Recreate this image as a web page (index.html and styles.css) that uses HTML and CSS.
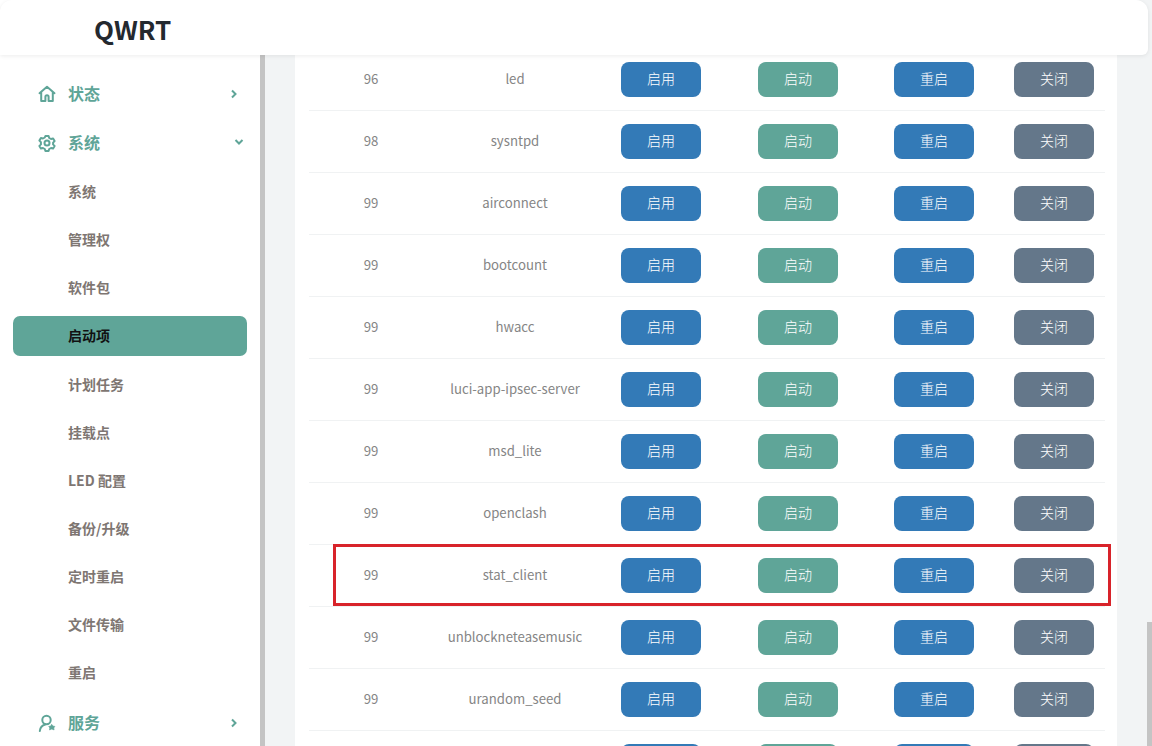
FILE: index.html
```html
<!DOCTYPE html>
<html lang="zh">
<head>
<meta charset="utf-8">
<title>QWRT</title>
<link rel="stylesheet" href="styles.css">
</head>
<body>
<header class="topbar"><span class="brand">QWRT</span></header>
<div class="layout">
  <nav class="sidebar">
    <a class="nav-top">
      <svg class="nav-icon" viewBox="0 0 18 18"><path d="M1.500 8.200 9 1.800l7.500 6.400M3.200 7v9h4.200v-4.200a1.600 1.600 0 0 1 3.200 0V16h4.200V7"/></svg>
      <span>状态</span>
      <svg class="chev" viewBox="0 0 8 10"><path d="M2 1.500 5.500 5 2 8.500"/></svg>
    </a>
    <a class="nav-top">
      <svg class="nav-icon" viewBox="0 0 18 18"><path d="M7.400 2h3.200l.6 2 1.800 1 2.100-.5 1.500 2.600-1.500 1.500v1.800l1.500 1.500-1.500 2.600-2.100-.5-1.800 1-.6 2H7.400l-.6-2-1.800-1-2.100.5-1.500-2.600 1.500-1.500V8.100L1.400 6.600l1.500-2.600 2.100.5 1.800-1z"/><circle cx="9" cy="9" r="2.500"/></svg>
      <span>系统</span>
      <svg class="chev chev-down" viewBox="0 0 10 8"><path d="M1.500 2 5 5.500 8.500 2"/></svg>
    </a>
    <a class="nav-sub">系统</a>
    <a class="nav-sub">管理权</a>
    <a class="nav-sub">软件包</a>
    <a class="nav-sub active">启动项</a>
    <a class="nav-sub">计划任务</a>
    <a class="nav-sub">挂载点</a>
    <a class="nav-sub">LED 配置</a>
    <a class="nav-sub">备份/升级</a>
    <a class="nav-sub">定时重启</a>
    <a class="nav-sub">文件传输</a>
    <a class="nav-sub">重启</a>
    <a class="nav-top nav-last">
      <svg class="nav-icon" viewBox="0 0 18 18"><circle cx="8.500" cy="6" r="4.200"/><path d="M1.800 17c.4-3.400 2.600-5.800 5.500-6.500"/><path class="fill" d="m13.800 10.500 1.200 1.600 1.900.3-1.100 1.500.3 2-2.300-.8-2.300.8.300-2-1.100-1.500 1.900-.3z"/></svg>
      <span>服务</span>
      <svg class="chev" viewBox="0 0 8 10"><path d="M2 1.500 5.500 5 2 8.500"/></svg>
    </a>
  </nav>
  <div class="side-scroll"></div>
  <main class="content">
    <section class="card">
      <div class="row"><span>96</span><span>led</span><button class="btn blue">启用</button><button class="btn green">启动</button><button class="btn blue">重启</button><button class="btn grey">关闭</button></div>
      <div class="row"><span>98</span><span>sysntpd</span><button class="btn blue">启用</button><button class="btn green">启动</button><button class="btn blue">重启</button><button class="btn grey">关闭</button></div>
      <div class="row"><span>99</span><span>airconnect</span><button class="btn blue">启用</button><button class="btn green">启动</button><button class="btn blue">重启</button><button class="btn grey">关闭</button></div>
      <div class="row"><span>99</span><span>bootcount</span><button class="btn blue">启用</button><button class="btn green">启动</button><button class="btn blue">重启</button><button class="btn grey">关闭</button></div>
      <div class="row"><span>99</span><span>hwacc</span><button class="btn blue">启用</button><button class="btn green">启动</button><button class="btn blue">重启</button><button class="btn grey">关闭</button></div>
      <div class="row"><span>99</span><span>luci-app-ipsec-server</span><button class="btn blue">启用</button><button class="btn green">启动</button><button class="btn blue">重启</button><button class="btn grey">关闭</button></div>
      <div class="row"><span>99</span><span>msd_lite</span><button class="btn blue">启用</button><button class="btn green">启动</button><button class="btn blue">重启</button><button class="btn grey">关闭</button></div>
      <div class="row"><span>99</span><span>openclash</span><button class="btn blue">启用</button><button class="btn green">启动</button><button class="btn blue">重启</button><button class="btn grey">关闭</button></div>
      <div class="row marked"><span>99</span><span>stat_client</span><button class="btn blue">启用</button><button class="btn green">启动</button><button class="btn blue">重启</button><button class="btn grey">关闭</button></div>
      <div class="row"><span>99</span><span>unblockneteasemusic</span><button class="btn blue">启用</button><button class="btn green">启动</button><button class="btn blue">重启</button><button class="btn grey">关闭</button></div>
      <div class="row"><span>99</span><span>urandom_seed</span><button class="btn blue">启用</button><button class="btn green">启动</button><button class="btn blue">重启</button><button class="btn grey">关闭</button></div>
      <div class="row"><span></span><span></span><button class="btn blue"></button><button class="btn green"></button><button class="btn blue"></button><button class="btn grey"></button></div>
    </section>
  </main>
</div>
<div class="page-thumb"></div>
</body>
</html>
```
FILE: styles.css
```css
* { box-sizing: border-box; }
html, body { margin: 0; height: 100%; overflow: hidden; }
body {
  position: relative;
  background: #dfeae7;
  font-family: "Noto Sans CJK SC", "Noto Sans", sans-serif;
  font-size: 14px;
}
.topbar {
  position: absolute;
  top: 0;
  left: 0;
  width: 1148px;
  height: 55px;
  z-index: 5;
  background: #fff;
  border-radius: 12px 12px 6px 0;
  box-shadow: 0 1px 4px rgba(0, 0, 0, .08);
  padding-left: 94px;
  display: flex;
  align-items: center;
}
.brand {
  font-size: 26px;
  line-height: 1;
  font-weight: 700;
  color: #24292f;
  margin-top: 3px;
}
.layout { display: flex; height: 100%; }
.sidebar {
  width: 260px;
  flex: none;
  background: #fff;
  padding-top: 70px;
  display: flex;
  flex-direction: column;
}
.nav-top {
  height: 49px;
  flex: none;
  display: flex;
  align-items: center;
  padding: 0 0 2px 38px;
  color: #5fa598;
  font-size: 16px;
  font-weight: 700;
}
.nav-top span { margin: 0 0 2px 12px; }
.nav-icon {
  width: 18px;
  height: 18px;
  fill: none;
  stroke: #5fa598;
  stroke-width: 2;
  stroke-linejoin: round;
  stroke-linecap: round;
}
.nav-icon .fill { fill: #5fa598; stroke-width: .6; }
.chev {
  width: 8px;
  height: 10px;
  margin-left: auto;
  margin-right: 22px;
  fill: none;
  stroke: #5fa598;
  stroke-width: 2;
}
.chev-down { width: 10px; height: 8px; margin-right: 16px; margin-top: -2px; }
.nav-sub {
  height: 40px;
  flex: none;
  margin: 4px 13px 4.150px;
  padding: 0 0 2px 55px;
  display: flex;
  align-items: center;
  border-radius: 7px;
  color: #7e7672;
  font-weight: 700;
  font-size: 14px;
}
.nav-sub.active { background: #5fa598; color: #111; }
.nav-last { margin-top: 2px; }
.side-scroll { width: 5px; flex: none; margin-top: 55px; background: #c4c4c4; }
.content {
  flex: 1;
  background: #f2f4f5;
  padding: 0 30px;
  overflow: hidden;
}
.card {
  width: 822px;
  background: #fff;
  padding: 49px 12px 0 14px;
  height: 100%;
}
.row {
  position: relative;
  display: grid;
  grid-template-columns: 124px 164px 128px 146px 126px 1fr;
  align-items: center;
  justify-items: center;
  height: 62px;
  border-bottom: 1px solid #f0f2f3;
  color: #858585;
  font-size: 13.200px;
}
.row span { margin-bottom: 2px; }
.btn {
  width: 80px;
  height: 35px;
  border: 0;
  border-radius: 8px;
  color: #fff;
  font: 300 14px "Noto Sans CJK SC", sans-serif;
  padding: 0 0 4px;
}
.btn:last-child { justify-self: end; margin-right: 11px; }
.blue { background: #337ab7; }
.green { background: #5fa598; }
.grey { background: #64778a; }
.marked::after {
  content: "";
  position: absolute;
  left: 24px;
  right: -6px;
  top: -1px;
  bottom: 0;
  border: 3px solid #d8232a;
}
.page-thumb {
  position: absolute;
  right: 0;
  top: 622px;
  bottom: 0;
  width: 5px;
  background: #c4c4c4;
}
```
